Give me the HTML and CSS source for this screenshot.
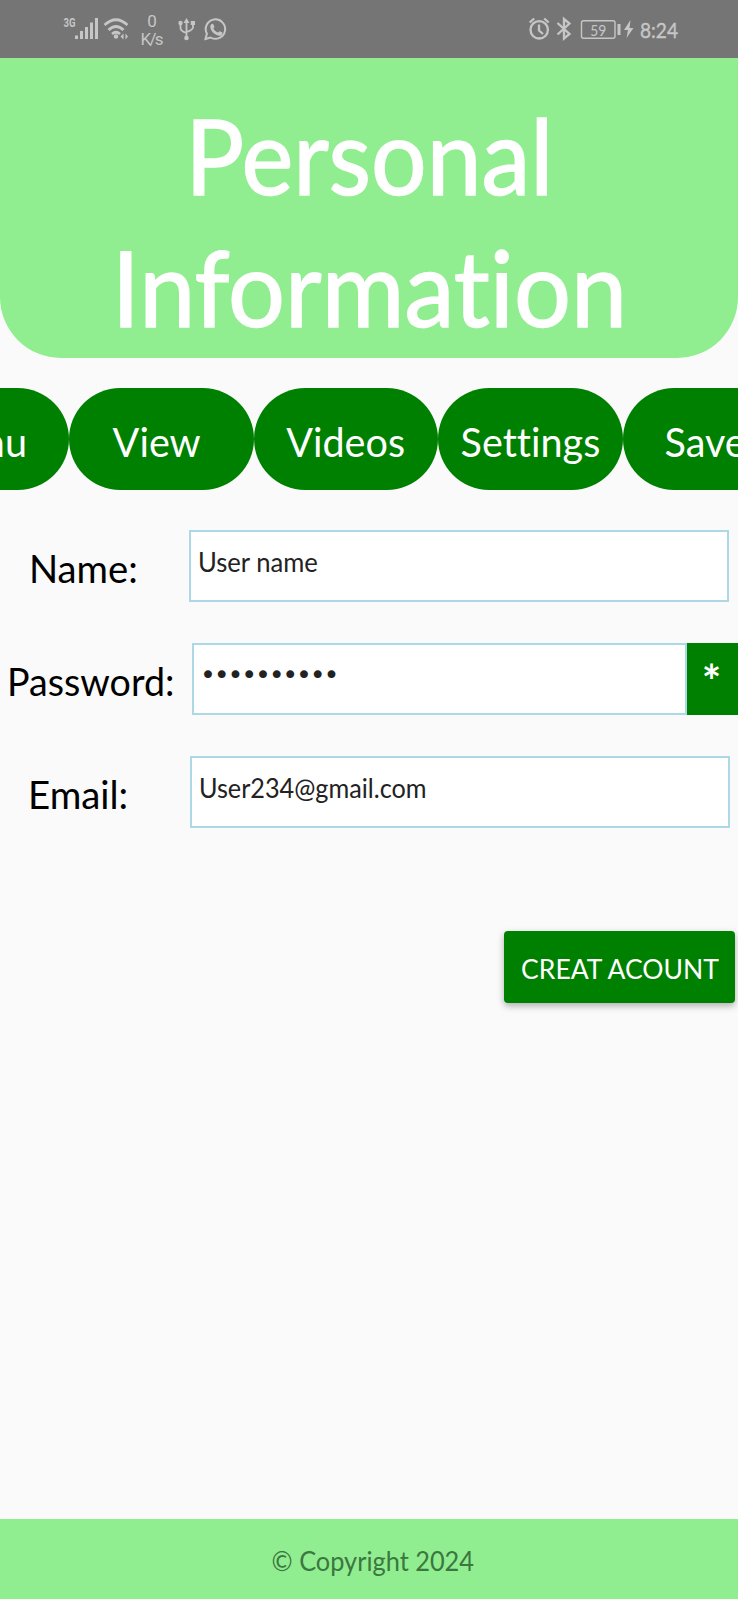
FILE: index.html
```html
<!DOCTYPE html>
<html lang="en">
<head>
<meta charset="utf-8">
<title>Personal Information</title>
<link rel="stylesheet" href="styles.css">
</head>
<body>
<div class="status">
  <svg class="status-left" width="180" height="58" viewBox="0 0 180 58" fill="#c6c6c6">
    <text class="net" x="3.500" y="27" textLength="12" lengthAdjust="spacingAndGlyphs">3G</text>
    <path d="M15 35.500h3v3.500h-3zM20 31h3v8h-3zM25 27h3v12h-3zM30 22.500h3v16.500h-3zM35 18h3v21h-3z"/>
    <g fill="none" stroke="#c6c6c6" stroke-width="2.700">
      <path d="M44.500 25Q56 14.500 67.500 25M48.500 30Q56 23 63.500 30M52 34Q56 30.500 60 34"/>
    </g>
    <circle cx="56" cy="36.500" r="2.200"/>
    <path d="M63.500 33.500v6l-3-3zM65.500 33.500v6l2.500-3z"/>
    <text class="speed" x="92" y="26.500" text-anchor="middle">0</text>
    <text class="speed" x="92" y="45" text-anchor="middle" textLength="23">K/s</text>
    <g fill="none" stroke="#c6c6c6" stroke-width="1.800">
      <path d="M126.500 21v17M120.500 23v5q0 3 6 5M133 22v5q0 3-6.500 5"/>
    </g>
    <path d="M126.500 18l3 5h-6zM130.800 21h4.200v4h-4.200z"/>
    <circle cx="120.500" cy="23" r="2.200"/><circle cx="126.500" cy="38" r="2.300"/>
    <path fill="none" stroke="#c6c6c6" stroke-width="2" d="M145.500 39l1.400-5.300a9.700 9.700 0 1 1 3.700 3.800z"/>
    <path d="M151 24.500c.8-1 2-.8 2.300-.2l1.100 2.500c.1.600-1.200 1.500-.9 2 1 1.800 2.400 3 4.300 3.800.6.200 1.300-1.500 1.900-1.300l2.600 1.300c.5.400.1 2-.9 2.700-1.500 1-3.600.5-5.700-.7-2.200-1.300-4.200-3.600-5-5.700-.6-1.700-.6-3.300.3-4.400z"/>
  </svg>
  <svg class="status-right" width="160" height="58" viewBox="0 0 160 58" fill="#c6c6c6">
    <g fill="none" stroke="#c6c6c6" stroke-width="2.300">
      <circle cx="19.200" cy="29.800" r="8.700"/>
      <path d="M19 24.500v6l4 3.500M9.700 22.500l4.500-4M24.200 18.500l4.500 4"/>
      <path d="M37.500 23l12 11-5.500 4.500V19l5.500 4.500-12 11"/>
      <rect x="61.500" y="20.800" width="33.500" height="17.500" rx="2" stroke-width="1.400"/>
    </g>
    <text class="charge" x="78.300" y="35.500" text-anchor="middle" textLength="16" lengthAdjust="spacingAndGlyphs">59</text>
    <path d="M97.500 24h3v11h-3zM110.500 20l-6.500 10h4l-1.500 8 7-10h-4z"/>
    <text class="clock" x="120" y="38" textLength="38" lengthAdjust="spacingAndGlyphs">8:24</text>
  </svg>
</div>
<header class="header">
  <h1 class="title"><span class="line line-one">Personal</span><span class="line line-two">Information</span></h1>
</header>
<nav class="tabs">
  <a class="tab"><span class="tab-text menu">Menu</span></a>
  <a class="tab"><span class="tab-text view">View</span></a>
  <a class="tab"><span class="tab-text videos">Videos</span></a>
  <a class="tab"><span class="tab-text settings">Settings</span></a>
  <a class="tab"><span class="tab-text save">Save</span></a>
</nav>
<main class="form">
  <div class="row">
    <div class="label label-name"><span class="fit fit-name">Name:</span></div>
    <div class="field field-name"><span class="fit fit-user">User name</span></div>
  </div>
  <div class="row">
    <div class="label label-password"><span class="fit fit-password">Password:</span></div>
    <div class="field field-password"><span class="dots">••••••••••</span></div>
    <div class="reveal">*</div>
  </div>
  <div class="row">
    <div class="label label-email"><span class="fit fit-email">Email:</span></div>
    <div class="field field-email"><span class="fit fit-mail">User234@gmail.com</span></div>
  </div>
  <div class="create"><span class="create-text">CREAT ACOUNT</span></div>
</main>
<footer class="footer"><span class="copy">© Copyright 2024</span></footer>
</body>
</html>
```

FILE: styles.css
```css
* { box-sizing: border-box; }
body {
  margin: 0;
  width: 738px;
  height: 1600px;
  overflow: hidden;
  display: flex;
  flex-direction: column;
  background: #fafafa;
  font-family: Lato, "Open Sans", sans-serif;
  font-variant-ligatures: none;
  color: #000;
}
.status {
  height: 58px;
  flex: none;
  display: flex;
  justify-content: space-between;
  padding: 0 58px 0 60px;
  background: #757575;
}
.net { font: bold 12px Roboto, sans-serif; }
.speed { font: 17px Roboto, sans-serif; }
.charge { font: 16px Lato, sans-serif; }
.clock { font: 22px Lato, sans-serif; stroke: #c6c6c6; stroke-width: .4px; }
.header {
  height: 299.500px;
  flex: none;
  padding-top: 31px;
  background: #90ee90;
  border-radius: 0 0 61px 61px;
}
.title {
  margin: 0;
  display: flex;
  flex-direction: column;
  align-items: center;
  font-size: 104px;
  font-weight: 400;
  line-height: 132px;
  color: #fff;
  -webkit-text-stroke: 1.500px #fff;
}
.line { white-space: nowrap; margin-left: 1px; }
.line-one { transform: scaleX(.943); }
.line-two { transform: scaleX(.967); }
.tabs {
  flex: none;
  display: flex;
  margin: 30.500px 0 0 -115.500px;
}
.tab {
  width: 184.500px;
  height: 101.500px;
  flex: none;
  display: flex;
  justify-content: center;
  padding-top: 5px;
  line-height: 97.500px;
  border-radius: 51px;
  background: #008000;
  color: #fff;
  font-size: 41px;
}
.tab-text { transform: scaleX(.965); }
.view { margin-right: 10px; }
.save { margin-right: 20px; }
.form { display: flex; flex-direction: column; padding-top: 40px; }
.row { display: flex; height: 72px; margin-bottom: 41px; }
.label {
  flex: none;
  padding-top: 2px;
  line-height: 72px;
  font-size: 39px;
  white-space: nowrap;
}
.label-name { width: 189px; padding-left: 29px; }
.label-password { width: 192px; padding-left: 7px; }
.label-email { width: 190px; padding-left: 28px; }
.fit { display: inline-block; transform-origin: 0 50%; }
.fit-name { transform: scaleX(.98); }
.fit-password { transform: scaleX(.965); }
.fit-email { transform: scaleX(.985); }
.fit-user { transform: scaleX(.985); }
.fit-mail { transform: scaleX(.97); }
.field {
  flex: none;
  width: 540px;
  padding-left: 7px;
  border: 2px solid #add8e6;
  background: #fff;
  color: #222;
  font-size: 26px;
  line-height: 60px;
}
.field-password { width: 495px; padding-left: 6px; }
.dots {
  display: block;
  font-family: "DejaVu Sans", sans-serif;
  font-size: 27px;
  line-height: 60px;
  letter-spacing: -2.200px;
}
.reveal {
  flex: 1;
  background: #008000;
  color: #fff;
  font-size: 46px;
  font-weight: 700;
  line-height: 76px;
  text-align: center;
  text-indent: -2px;
}
.create {
  align-self: flex-end;
  margin: 62px 3px 0 0;
  width: 231px;
  height: 72px;
  display: flex;
  justify-content: center;
  border-radius: 4px;
  background: #008000;
  box-shadow: 0 3px 7px rgba(0, 0, 0, .3);
  color: #fff;
  font-size: 26px;
  line-height: 76px;
  white-space: nowrap;
}
.create-text { transform: scaleX(1.02); margin-left: 1px; }
.footer {
  height: 80px;
  flex: none;
  margin-top: auto;
  margin-bottom: 1px;
  display: flex;
  justify-content: center;
  background: #90ee90;
  color: #3c7640;
  font-size: 26px;
  line-height: 85px;
}
.copy { margin-left: 8px; transform: scaleX(.975); }
```
